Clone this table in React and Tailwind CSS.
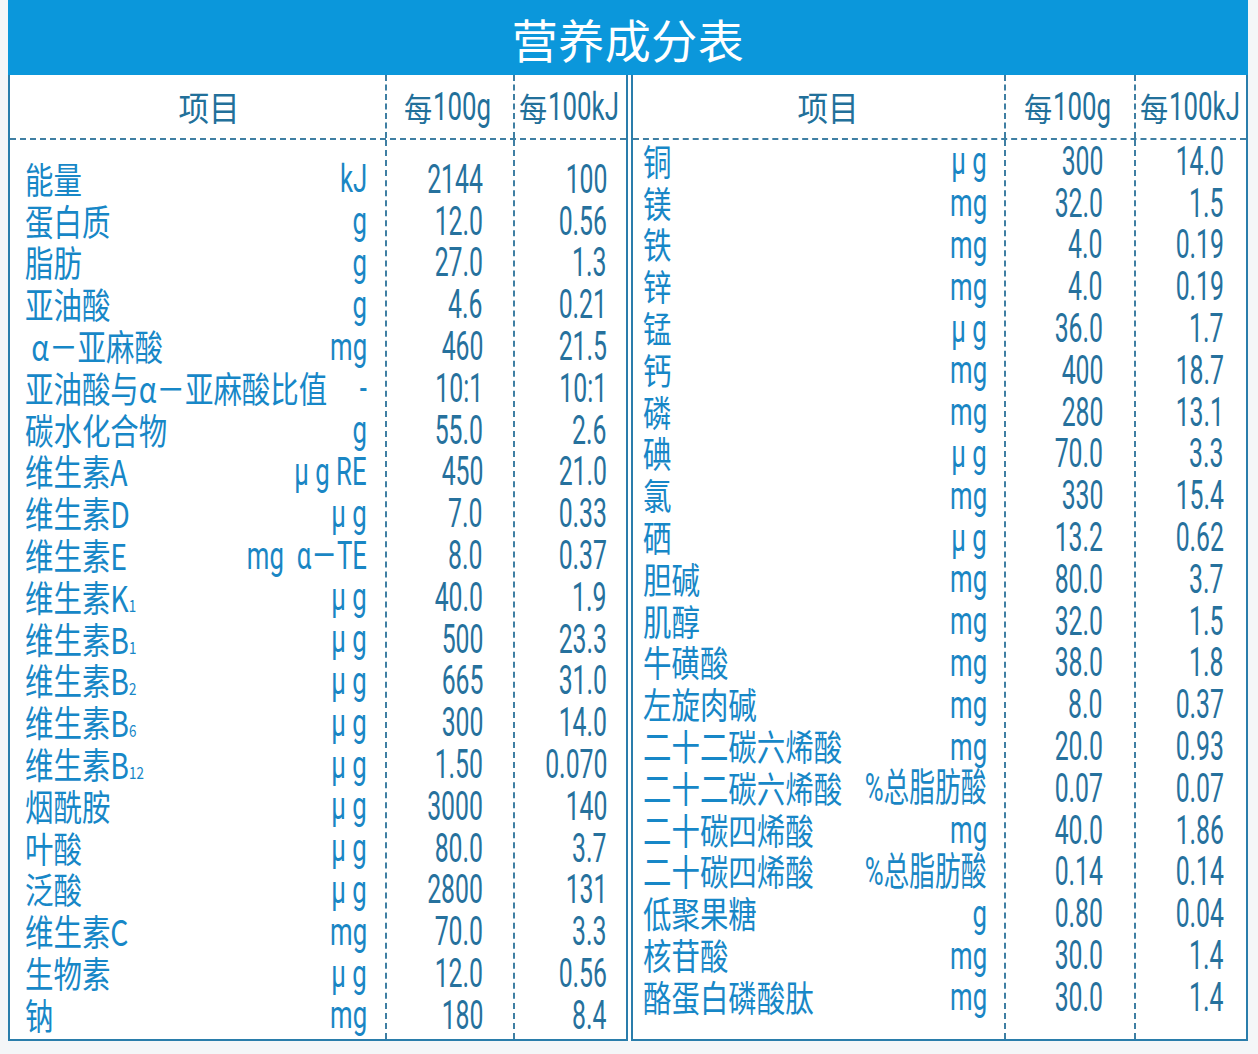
import React from "react";

const CJK = "font-['Noto_Sans_CJK_SC','Noto_Sans',sans-serif]";
const NUM = "font-['Roboto','Noto_Sans_CJK_SC',sans-serif]";

const leftRows = [
  ["能量", "kJ", "2144", "100"],
  ["蛋白质", "g", "12.0", "0.56"],
  ["脂肪", "g", "27.0", "1.3"],
  ["亚油酸", "g", "4.6", "0.21"],
  [" α－亚麻酸", "mg", "460", "21.5"],
  ["亚油酸与α－亚麻酸比值", "-", "10:1", "10:1"],
  ["碳水化合物", "g", "55.0", "2.6"],
  ["维生素A", "μ g RE", "450", "21.0"],
  ["维生素D", "μ g", "7.0", "0.33"],
  ["维生素E", "mg  α－TE", "8.0", "0.37"],
  [["维生素K", "1"], "μ g", "40.0", "1.9"],
  [["维生素B", "1"], "μ g", "500", "23.3"],
  [["维生素B", "2"], "μ g", "665", "31.0"],
  [["维生素B", "6"], "μ g", "300", "14.0"],
  [["维生素B", "12"], "μ g", "1.50", "0.070"],
  ["烟酰胺", "μ g", "3000", "140"],
  ["叶酸", "μ g", "80.0", "3.7"],
  ["泛酸", "μ g", "2800", "131"],
  ["维生素C", "mg", "70.0", "3.3"],
  ["生物素", "μ g", "12.0", "0.56"],
  ["钠", "mg", "180", "8.4"],
];

const rightRows = [
  ["铜", "μ g", "300", "14.0"],
  ["镁", "mg", "32.0", "1.5"],
  ["铁", "mg", "4.0", "0.19"],
  ["锌", "mg", "4.0", "0.19"],
  ["锰", "μ g", "36.0", "1.7"],
  ["钙", "mg", "400", "18.7"],
  ["磷", "mg", "280", "13.1"],
  ["碘", "μ g", "70.0", "3.3"],
  ["氯", "mg", "330", "15.4"],
  ["硒", "μ g", "13.2", "0.62"],
  ["胆碱", "mg", "80.0", "3.7"],
  ["肌醇", "mg", "32.0", "1.5"],
  ["牛磺酸", "mg", "38.0", "1.8"],
  ["左旋肉碱", "mg", "8.0", "0.37"],
  ["二十二碳六烯酸", "mg", "20.0", "0.93"],
  ["二十二碳六烯酸", "%总脂肪酸", "0.07", "0.07"],
  ["二十碳四烯酸", "mg", "40.0", "1.86"],
  ["二十碳四烯酸", "%总脂肪酸", "0.14", "0.14"],
  ["低聚果糖", "g", "0.80", "0.04"],
  ["核苷酸", "mg", "30.0", "1.4"],
  ["酪蛋白磷酸肽", "mg", "30.0", "1.4"],
];

function Name({ value }) {
  const text = Array.isArray(value) ? (
    <>
      {value[0]}
      <span className="text-[17px]">{value[1]}</span>
    </>
  ) : (
    value
  );
  return (
    <div className="flex-1 min-w-0 whitespace-pre">
      <span className={`inline-block origin-left scale-x-[0.79] text-[36px] leading-none text-[#1787c7] ${CJK}`}>
        {text}
      </span>
    </div>
  );
}

function Unit({ value }) {
  return (
    <div className="shrink-0 whitespace-pre">
      <span className={`inline-block origin-right scale-x-[0.66] text-[39px] leading-none text-[#1a86c4] ${NUM}`}>
        {value}
      </span>
    </div>
  );
}

function Num({ value }) {
  return (
    <span className={`inline-block origin-right scale-x-[0.62] text-[40px] leading-none text-[#26719d] whitespace-nowrap ${NUM}`}>
      {value}
    </span>
  );
}

function HeadPer({ unit }) {
  return (
    <span className="inline-flex items-center whitespace-nowrap text-[#22709a]">
      <span className={`inline-block text-[32px] leading-none scale-x-[0.88] ${CJK}`}>每</span>
      <span className={`inline-block -ml-[1px] text-[38px] leading-none scale-x-[0.68] origin-left ${NUM}`}>{unit}</span>
    </span>
  );
}

function Half({ rows, widths, pads, bodyPad, headPad, border }) {
  const dash = "border-r-2 border-dashed border-[#3f7fa3]";
  return (
    <div className={`flex flex-col border-b-2 border-[#2a7dab] ${border}`}>
      <div className="flex h-[65px] border-b-2 border-dashed border-[#3f7fa3]">
        <div className={`${widths[0]} ${dash} ${headPad} flex items-center justify-center`}>
          <span className={`inline-block text-[34px] leading-none scale-x-[0.9] text-[#22709a] ${CJK}`}>项目</span>
        </div>
        <div className={`${widths[1]} ${dash} flex items-center justify-center overflow-visible`}>
          <div className="w-[100px] shrink-0 flex justify-start pl-[2px]">
            <HeadPer unit="100g" />
          </div>
        </div>
        <div className={`${widths[2]} flex items-center overflow-visible`}>
          <div className="w-[110px] shrink-0 flex justify-start pl-[2px]">
            <HeadPer unit="100kJ" />
          </div>
        </div>
      </div>
      <div className="flex h-[899px]">
        <div className={`${widths[0]} ${dash} ${bodyPad} ${pads[0]}`}>
          {rows.map((r, i) => (
            <div key={i} className="flex items-center h-[41.8px]">
              <Name value={r[0]} />
              <Unit value={r[1]} />
            </div>
          ))}
        </div>
        <div className={`${widths[1]} ${dash} ${bodyPad} ${pads[1]}`}>
          {rows.map((r, i) => (
            <div key={i} className="flex items-center justify-end h-[41.8px]">
              <Num value={r[2]} />
            </div>
          ))}
        </div>
        <div className={`${widths[2]} ${bodyPad} ${pads[2]}`}>
          {rows.map((r, i) => (
            <div key={i} className="flex items-center justify-end h-[41.8px]">
              <Num value={r[3]} />
            </div>
          ))}
        </div>
      </div>
    </div>
  );
}

export default function App() {
  return (
    <div className="w-[1258px] h-[1054px] bg-[#f4f6f8] overflow-hidden">
      <div className="ml-[8px] w-[1240px] bg-white">
        <div className="h-[75px] bg-[#0b97db] flex items-center justify-center">
          <span className={`text-[46px] leading-none text-white tracking-[0.5px] ${CJK}`}>营养成分表</span>
        </div>
        <div className="flex gap-[3px]">
          <Half
            rows={leftRows}
            border="border-l-2 border-r-2 w-[620px]"
            widths={["w-[377px]", "w-[128px]", "w-[111px]"]}
            pads={["pl-[15px] pr-[18px]", "pr-[30px]", "pr-[19px]"]}
            bodyPad="pt-[19px]"
            headPad="pl-[22px]"
          />
          <Half
            rows={rightRows}
            border="border-l-2 border-r-2 w-[617px]"
            widths={["w-[373px]", "w-[130px]", "w-[110px]"]}
            pads={["pl-[10px] pr-[17px]", "pr-[31px]", "pr-[22px]"]}
            bodyPad="pt-[1px]"
            headPad="pl-[18px]"
          />
        </div>
      </div>
    </div>
  );
}
